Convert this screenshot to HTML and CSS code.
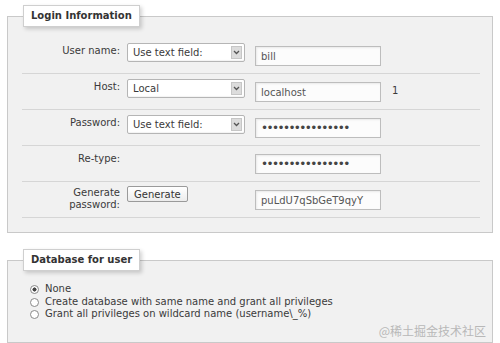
FILE: index.html
```html
<!DOCTYPE html>
<html lang="en">
<head>
    <meta charset="UTF-8">
    <title>Add user</title>
    <link rel="stylesheet" href="styles.css">
</head>
<body>
    <fieldset class="box login-box">
        <legend>Login Information</legend>

        <div class="row">
            <label class="label">User name:</label>
            <div class="select"><span>Use text field:</span><i class="arrow"><svg width="7" height="5" viewBox="0 0 7 5"><path d="M1 1 L3.5 3.5 L6 1" fill="none" stroke="#555" stroke-width="1.3"/></svg></i></div>
            <input class="field" type="text" value="bill">
        </div>

        <div class="row">
            <label class="label">Host:</label>
            <div class="select"><span>Local</span><i class="arrow"><svg width="7" height="5" viewBox="0 0 7 5"><path d="M1 1 L3.5 3.5 L6 1" fill="none" stroke="#555" stroke-width="1.3"/></svg></i></div>
            <input class="field" type="text" value="localhost">
            <span class="note">1</span>
        </div>

        <div class="row">
            <label class="label">Password:</label>
            <div class="select"><span>Use text field:</span><i class="arrow"><svg width="7" height="5" viewBox="0 0 7 5"><path d="M1 1 L3.5 3.5 L6 1" fill="none" stroke="#555" stroke-width="1.3"/></svg></i></div>
            <input class="field secret" type="password" value="xxxxxxxxxxxxxxxx">
        </div>

        <div class="row">
            <label class="label">Re-type:</label>
            <div class="spacer"></div>
            <input class="field secret" type="password" value="xxxxxxxxxxxxxxxx">
        </div>

        <div class="row">
            <label class="label two-line">Generate<br>password:</label>
            <div class="spacer"><button class="btn">Generate</button></div>
            <input class="field" type="text" value="puLdU7qSbGeT9qyY">
        </div>
    </fieldset>

    <fieldset class="box db-box">
        <legend>Database for user</legend>
        <ul class="choices">
            <li><input type="radio" name="db" checked> None</li>
            <li><input type="radio" name="db"> Create database with same name and grant all privileges</li>
            <li><input type="radio" name="db"> Grant all privileges on wildcard name (username\_%)</li>
        </ul>
        <div class="mark">@稀土掘金技术社区</div>
    </fieldset>
</body>
</html>
```

FILE: styles.css
```css
body {
    margin: 0;
    padding: 5px 7px 0;
    background: #fff;
    color: #3a3a3a;
    font-family: "DejaVu Sans", Verdana, sans-serif;
    font-size: 10px;
}
.box {
    margin: 0;
    padding: 11px 12px 14px 15px;
    border: 1px solid #c9c9c9;
    background: #f1f1f1;
    position: relative;
}
.box legend {
    padding: 4px 7px;
    background: #fff;
    border: 1px solid #cfcfcf;
    box-shadow: 2px 2px 4px rgba(0, 0, 0, 0.18);
    font-weight: bold;
    line-height: 12px;
    color: #333;
}
.db-box {
    margin-top: 16px;
    padding-top: 12px;
    padding-bottom: 21px;
}
.row {
    display: flex;
    align-items: flex-start;
    height: 36px;
    box-sizing: border-box;
    padding-top: 5px;
    margin-left: -1px;
    border-bottom: 1px solid #d6d6d6;
}
.label {
    width: 98px;
    text-align: right;
    line-height: 14px;
    padding-top: 1px;
    margin-right: 7px;
}
.label.two-line {
    line-height: 12px;
    padding-top: 0;
}
.select {
    width: 118px;
    height: 19px;
    box-sizing: border-box;
    border: 1px solid #b5b5b5;
    border-radius: 2px;
    background: #fff;
    display: flex;
    align-items: center;
    justify-content: space-between;
    padding: 0 2px 0 5px;
    box-shadow: inset 0 -1px 1px rgba(0, 0, 0, 0.05);
}
.arrow {
    width: 11px;
    height: 13px;
    background: #dcdcdc;
    border: 1px solid #c6c6c6;
    box-sizing: border-box;
    display: flex;
    align-items: center;
    justify-content: center;
}
.spacer {
    width: 118px;
}
.field {
    margin: 3px 0 0 10px;
    width: 126px;
    height: 20px;
    box-sizing: border-box;
    border: 1px solid #bdbdbd;
    background: #fcfcfc;
    box-shadow: inset 1px 1px 2px rgba(0, 0, 0, 0.08);
    padding: 0 5px;
    font-family: "DejaVu Sans", Verdana, sans-serif;
    font-size: 10px;
    color: #555;
}
.field.secret {
    font-size: 12px;
    letter-spacing: -1.6px;
    color: #444;
}
.note {
    margin: 6px 0 0 11px;
}
.btn {
    margin-top: -1px;
    height: 16px;
    padding: 0 6px;
    border: 1px solid #9a9a9a;
    border-radius: 2px;
    background: linear-gradient(#fff, #ececec);
    font-family: "DejaVu Sans", Verdana, sans-serif;
    font-size: 10px;
    color: #333;
    line-height: 13px;
}
.choices {
    list-style: none;
    margin: 0;
    padding: 0 0 0 5px;
}
.choices li {
    line-height: 12.5px;
    height: 12.5px;
    display: flex;
    align-items: center;
}
.choices input {
    appearance: none;
    width: 9px;
    height: 9px;
    margin: 1px 6px 0 2px;
    border: 1px solid #8a8a8a;
    border-radius: 50%;
    background: #fff;
    box-sizing: border-box;
}
.choices input:checked {
    background: radial-gradient(circle, #444 0 1.8px, #fff 2.3px);
}
.mark {
    position: absolute;
    right: 6px;
    bottom: 3px;
    font-family: "Noto Sans CJK SC", sans-serif;
    font-size: 12px;
    color: #b8b8b8;
}
```
